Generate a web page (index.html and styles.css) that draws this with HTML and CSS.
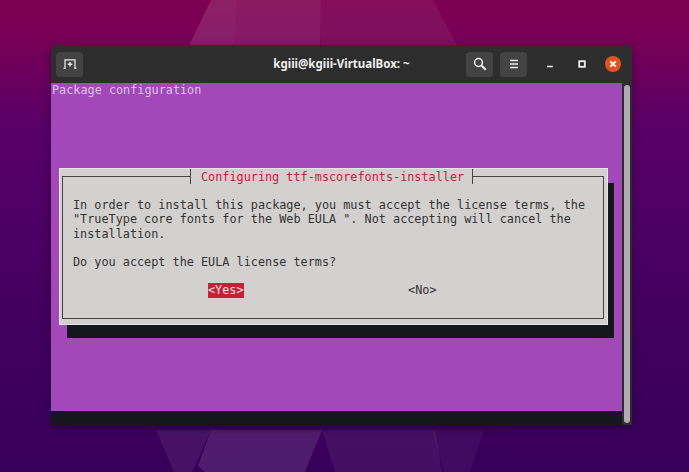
FILE: index.html
```html
<!DOCTYPE html>
<html lang="en">
<head>
<meta charset="utf-8">
<title>Terminal</title>
<link rel="stylesheet" href="styles.css">
</head>
<body>
<svg class="wallpaper" viewBox="0 0 689 472" aria-hidden="true">
  <polygon points="211,0 182,60 234,50 237,0" fill="#fff" fill-opacity=".12"/>
  <polygon points="237,0 234,50 320,45 321,0" fill="#fff" fill-opacity=".1"/>
  <polygon points="321,0 320,60 465,60 433,0" fill="#fff" fill-opacity=".06"/>
  <polygon points="156,430 174,472 192,472 211,430" fill="#fff" fill-opacity=".07"/>
  <polygon points="211,430 198,466 205,472 305,472 322,430" fill="#fff" fill-opacity=".11"/>
  <polygon points="322,430 335,472 442,472 435,430" fill="#fff" fill-opacity=".06"/>
  <polygon points="432,430 444,472 470,472 484,430" fill="#fff" fill-opacity=".04"/>
</svg>
<main class="window">
  <header class="titlebar">
    <div class="bar-start">
      <button class="tool-btn" aria-label="New tab">
        <svg width="14" height="10" viewBox="0 0 14 10" fill="none" stroke="#eee" stroke-width="1.200"><path d="M.5 9.400h1.500V.8h10v8.600h1.500" /><path d="M7 3v4.600M4.700 5.300h4.600" stroke-width="1.400"/></svg>
      </button>
    </div>
    <h1 class="title">kgiii@kgiii-VirtualBox: ~</h1>
    <div class="bar-end">
      <div class="actions">
        <button class="tool-btn" aria-label="Search">
          <svg width="14" height="14" viewBox="0 0 14 14" fill="none" stroke="#eee" stroke-width="1.500"><circle cx="5.500" cy="5.500" r="3.900"/><path d="M8.500 8.500l4.200 4.200" stroke-width="2"/></svg>
        </button>
        <button class="tool-btn" aria-label="Menu">
          <svg width="10" height="10" viewBox="0 0 10 10" stroke="#eee" stroke-width="1.500"><path d="M1 1.500h8M1 5h8M1 8.500h8"/></svg>
        </button>
      </div>
      <div class="wm-controls">
        <span class="wm-btn"><svg width="8" height="8" viewBox="0 0 8 8" stroke="#eee" stroke-width="1.500"><path d="M1 6.500h6"/></svg></span>
        <span class="wm-btn"><svg width="8" height="8" viewBox="0 0 8 8" fill="none" stroke="#eee" stroke-width="1.800"><rect x="1.200" y="1.200" width="5.600" height="5.600"/></svg></span>
        <span class="wm-close"><svg width="8" height="8" viewBox="0 0 8 8" stroke="#fff" stroke-width="1.800"><path d="M1.300 1.300l5.400 5.400M6.700 1.300l-5.400 5.400"/></svg></span>
      </div>
    </div>
  </header>
  <div class="body">
    <section class="terminal">
      <div class="screen">
        <p class="backtitle">Package configuration</p>
        <div class="dialog">
          <div class="frame">
            <h2 class="dialog-title">Configuring ttf-mscorefonts-installer</h2>
            <p class="message">In order to install this package, you must accept the license terms, the
"TrueType core fonts for the Web EULA ". Not accepting will cancel the
installation.

Do you accept the EULA license terms?</p>
            <div class="choices">
              <span class="choice selected">&lt;Yes&gt;</span>
              <span class="choice">&lt;No&gt;</span>
            </div>
          </div>
        </div>
      </div>
      <div class="statusline"></div>
    </section>
    <div class="scrollbar"><div class="thumb"></div></div>
  </div>
</main>
</body>
</html>
```
FILE: styles.css
```css
* { box-sizing: border-box; }
body {
  margin: 0;
  height: 472px;
  overflow: hidden;
  position: relative;
  padding: 45px 57px 0 51px;
  background: linear-gradient(180deg, #7f0050 0, #740058 50px, #580068 130px, #500068 200px, #44005f 300px, #38005a 472px);
}
.wallpaper { position: absolute; inset: 0; width: 689px; height: 472px; }
.window {
  position: relative;
  width: 581px;
  height: 380px;
  display: flex;
  flex-direction: column;
  background: #2d2d2d;
  border-radius: 6px 6px 0 0;
  box-shadow: 0 3px 10px rgba(20, 0, 30, .45);
}
.titlebar {
  height: 38px;
  flex: none;
  display: grid;
  grid-template-columns: 1fr auto 1fr;
  align-items: center;
  padding: 0 11px 0 5px;
}
.bar-start { display: flex; }
.bar-end { display: flex; justify-content: flex-end; align-items: center; }
.tool-btn {
  width: 27px;
  height: 25px;
  padding: 0;
  border: 0;
  border-radius: 4px;
  background: #434343;
  display: flex;
  align-items: center;
  justify-content: center;
}
.title {
  margin: 0 0 0 6px;
  text-align: center;
  font: 700 11.5px/1 "Noto Sans", sans-serif;
  color: #eee;
}
.actions { display: flex; gap: 7px; margin-right: 15px; }
.wm-controls { display: flex; align-items: center; gap: 15.5px; }
.wm-btn { width: 16px; height: 16px; display: flex; align-items: center; justify-content: center; }
.wm-close {
  width: 16px;
  height: 16px;
  border-radius: 50%;
  background: #e0551f;
  display: flex;
  align-items: center;
  justify-content: center;
}
.body { flex: 1; display: flex; min-height: 0; }
.terminal {
  width: 571px;
  display: flex;
  flex-direction: column;
  font: 11.82px/14.3px "DejaVu Sans Mono", monospace;
}
.screen {
  flex: 1;
  background: #a348b9;
  padding-left: 1px;
  position: relative;
  z-index: 0;
}
.backtitle { margin: 0; color: #dcc4e4; height: 85px; }
.dialog {
  position: relative;
  width: 549px;
  height: 157px;
  margin-left: 7px;
  padding: 7px 3px 5px 2px;
  background: #d3d1cf;
  border: 1px solid #e6e5e3;
}
.dialog::after {
  content: "";
  position: absolute;
  z-index: -1;
  left: 7px;
  right: -7px;
  top: 14px;
  bottom: -14px;
  background: #16161e;
}
.frame {
  position: relative;
  height: 100%;
  border: 1px solid #444;
  padding: 21px 10px 0;
}
.dialog-title {
  position: absolute;
  top: -8px;
  left: 127px;
  margin: 0;
  padding: 1px 8px 0 10px;
  font: inherit;
  line-height: 14px;
  color: #c4203a;
  background: #d3d1cf;
  border-left: 1px solid #444;
  border-right: 1px solid #444;
  white-space: nowrap;
}
.message { margin: 0; color: #333; white-space: pre; }
.choices {
  display: flex;
  margin-top: 14px;
  padding-left: 135px;
  gap: 164.5px;
  color: #333;
}
.selected { background: #c71f36; color: #f0e0e0; }
.statusline { height: 14px; background: #16161e; flex: none; }
.scrollbar { flex: 1; }
.thumb { margin: 2px; width: 6px; height: 338px; border-radius: 3px; background: #b0abb2; }
```
